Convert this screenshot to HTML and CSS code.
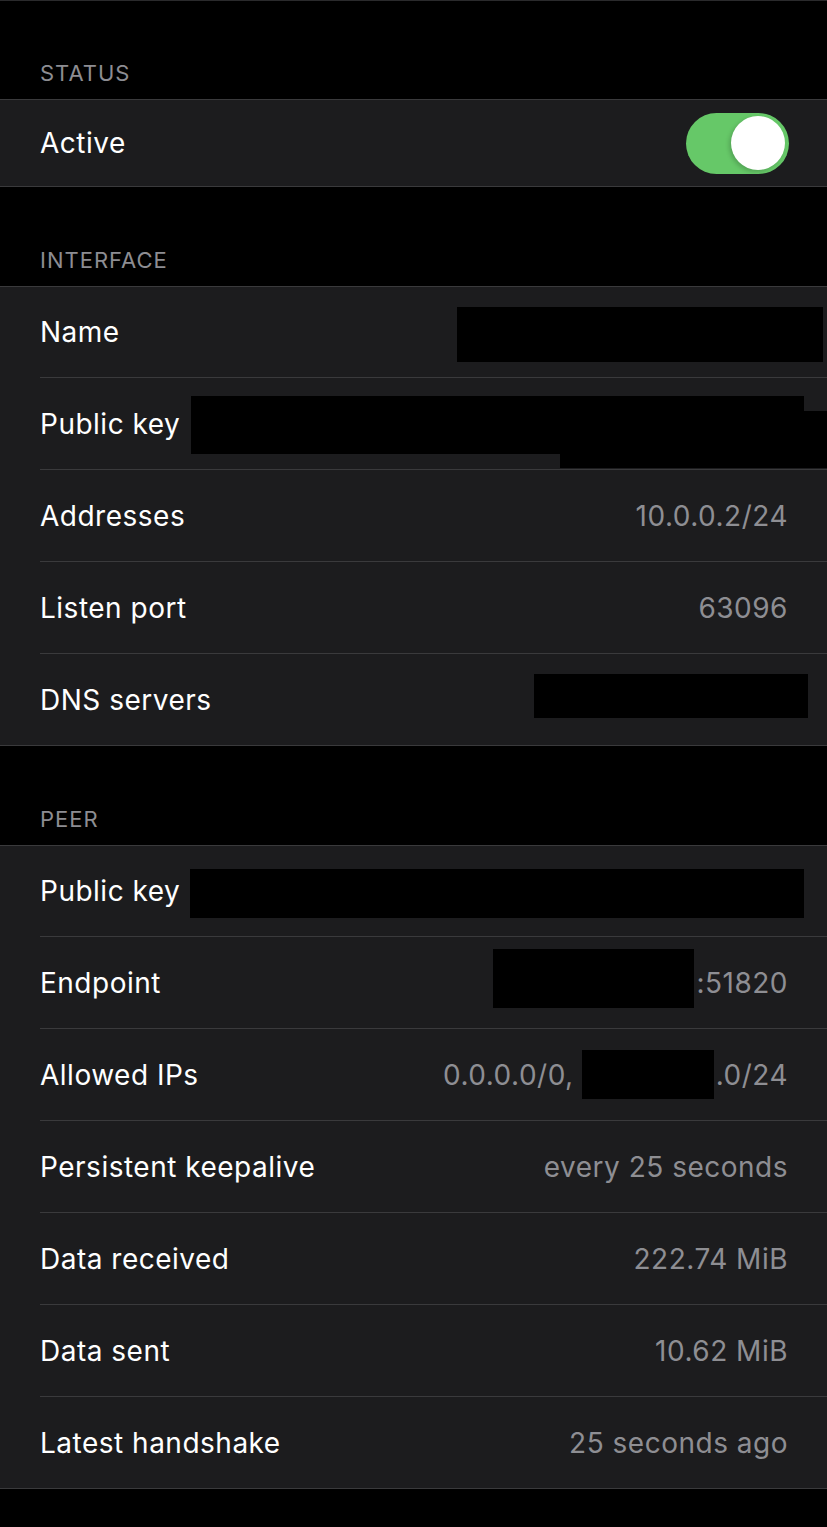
FILE: index.html
```html
<!DOCTYPE html>
<html lang="en">
<head>
<meta charset="utf-8">
<title>Tunnel</title>
<link rel="stylesheet" href="styles.css">
</head>
<body>
<div class="screen">
  <section class="group group-first">
    <div class="group-header">STATUS</div>
    <div class="cells">
      <div class="row row-status">
        <span class="label">Active</span>
        <span class="value">
          <span class="switch"><span class="knob"></span></span>
        </span>
      </div>
    </div>
  </section>

  <section class="group">
    <div class="group-header">INTERFACE</div>
    <div class="cells">
      <div class="row">
        <span class="label">Name</span>
        <span class="value"><span class="redact redact-name"></span></span>
      </div>
      <div class="row">
        <span class="label">Public key</span>
        <span class="value">
          <span class="redact-stack">
            <span class="redact redact-key-a"></span>
            <span class="redact redact-key-b"></span>
          </span>
        </span>
      </div>
      <div class="row">
        <span class="label">Addresses</span>
        <span class="value">10.0.0.2/24</span>
      </div>
      <div class="row">
        <span class="label">Listen port</span>
        <span class="value">63096</span>
      </div>
      <div class="row">
        <span class="label">DNS servers</span>
        <span class="value"><span class="redact redact-dns"></span></span>
      </div>
    </div>
  </section>

  <section class="group">
    <div class="group-header">PEER</div>
    <div class="cells">
      <div class="row">
        <span class="label">Public key</span>
        <span class="value"><span class="redact redact-peer-key"></span></span>
      </div>
      <div class="row">
        <span class="label">Endpoint</span>
        <span class="value"><span class="redact redact-endpoint"></span>:51820</span>
      </div>
      <div class="row">
        <span class="label">Allowed IPs</span>
        <span class="value">0.0.0.0/0,<span class="redact redact-ips"></span>.0/24</span>
      </div>
      <div class="row">
        <span class="label">Persistent keepalive</span>
        <span class="value">every 25 seconds</span>
      </div>
      <div class="row">
        <span class="label">Data received</span>
        <span class="value">222.74 MiB</span>
      </div>
      <div class="row">
        <span class="label">Data sent</span>
        <span class="value">10.62 MiB</span>
      </div>
      <div class="row">
        <span class="label">Latest handshake</span>
        <span class="value">25 seconds ago</span>
      </div>
    </div>
  </section>
</div>
</body>
</html>
```

FILE: styles.css
```css
* {
  box-sizing: border-box;
}

html, body {
  margin: 0;
  padding: 0;
  background: #000000;
}

body {
  font-family: Inter, "Liberation Sans", Arial, sans-serif;
  color: #ffffff;
  -webkit-font-smoothing: antialiased;
}

.screen {
  width: 827px;
  min-height: 1527px;
  border-top: 1px solid #2a2a2c;
  background: #000000;
  overflow: hidden;
}

.group-header {
  height: 99px;
  display: flex;
  align-items: flex-end;
  padding: 0 40px 15px;
  font-size: 22px;
  line-height: 22px;
  color: #8d8d92;
  letter-spacing: 1px;
}

.group-first .group-header {
  height: 98px;
}

.cells {
  background: #1c1c1e;
  border-top: 1px solid #3a3a3c;
  border-bottom: 1px solid #3a3a3c;
}

.row {
  margin-left: 40px;
  padding-right: 39px;
  height: 92px;
  border-top: 1px solid #3a3a3c;
  display: flex;
  align-items: center;
  font-size: 28px;
  line-height: 34px;
  letter-spacing: 0.5px;
}

.row:first-child {
  height: 90px;
  border-top: none;
}

.row-status:first-child {
  height: 86px;
}

.label {
  color: #ffffff;
  white-space: nowrap;
}

.value {
  margin-left: auto;
  display: flex;
  align-items: center;
  color: #8e8e93;
  white-space: nowrap;
}

.switch {
  width: 103px;
  height: 61px;
  border-radius: 31px;
  background: #66c868;
  display: flex;
  align-items: center;
  justify-content: flex-end;
  padding: 0 4px;
  margin-right: -1px;
}

.knob {
  width: 54px;
  height: 54px;
  border-radius: 50%;
  background: #ffffff;
  box-shadow: -2px 2px 4px rgba(0, 0, 0, 0.18);
}

.redact {
  display: block;
  background: #000000;
}

.redact-name {
  width: 366px;
  height: 55px;
  margin-right: -35px;
  margin-top: 5px;
}

.redact-stack {
  width: 636px;
  height: 72px;
  margin-right: -39px;
  margin-top: 16px;
  display: flex;
  flex-direction: column;
}

.redact-key-a {
  width: 613px;
  height: 58px;
}

.redact-key-b {
  width: 267px;
  height: 57px;
  margin-top: -43px;
  margin-left: 369px;
}

.redact-dns {
  width: 274px;
  height: 44px;
  margin-right: -20px;
  margin-bottom: 8px;
}

.redact-peer-key {
  width: 614px;
  height: 49px;
  margin-right: -16px;
  margin-top: 4px;
}

.redact-endpoint {
  width: 201px;
  height: 59px;
  margin-right: 2px;
  margin-bottom: 9px;
}

.redact-ips {
  width: 132px;
  height: 49px;
  margin: 0 2px 0 8px;
}
```
